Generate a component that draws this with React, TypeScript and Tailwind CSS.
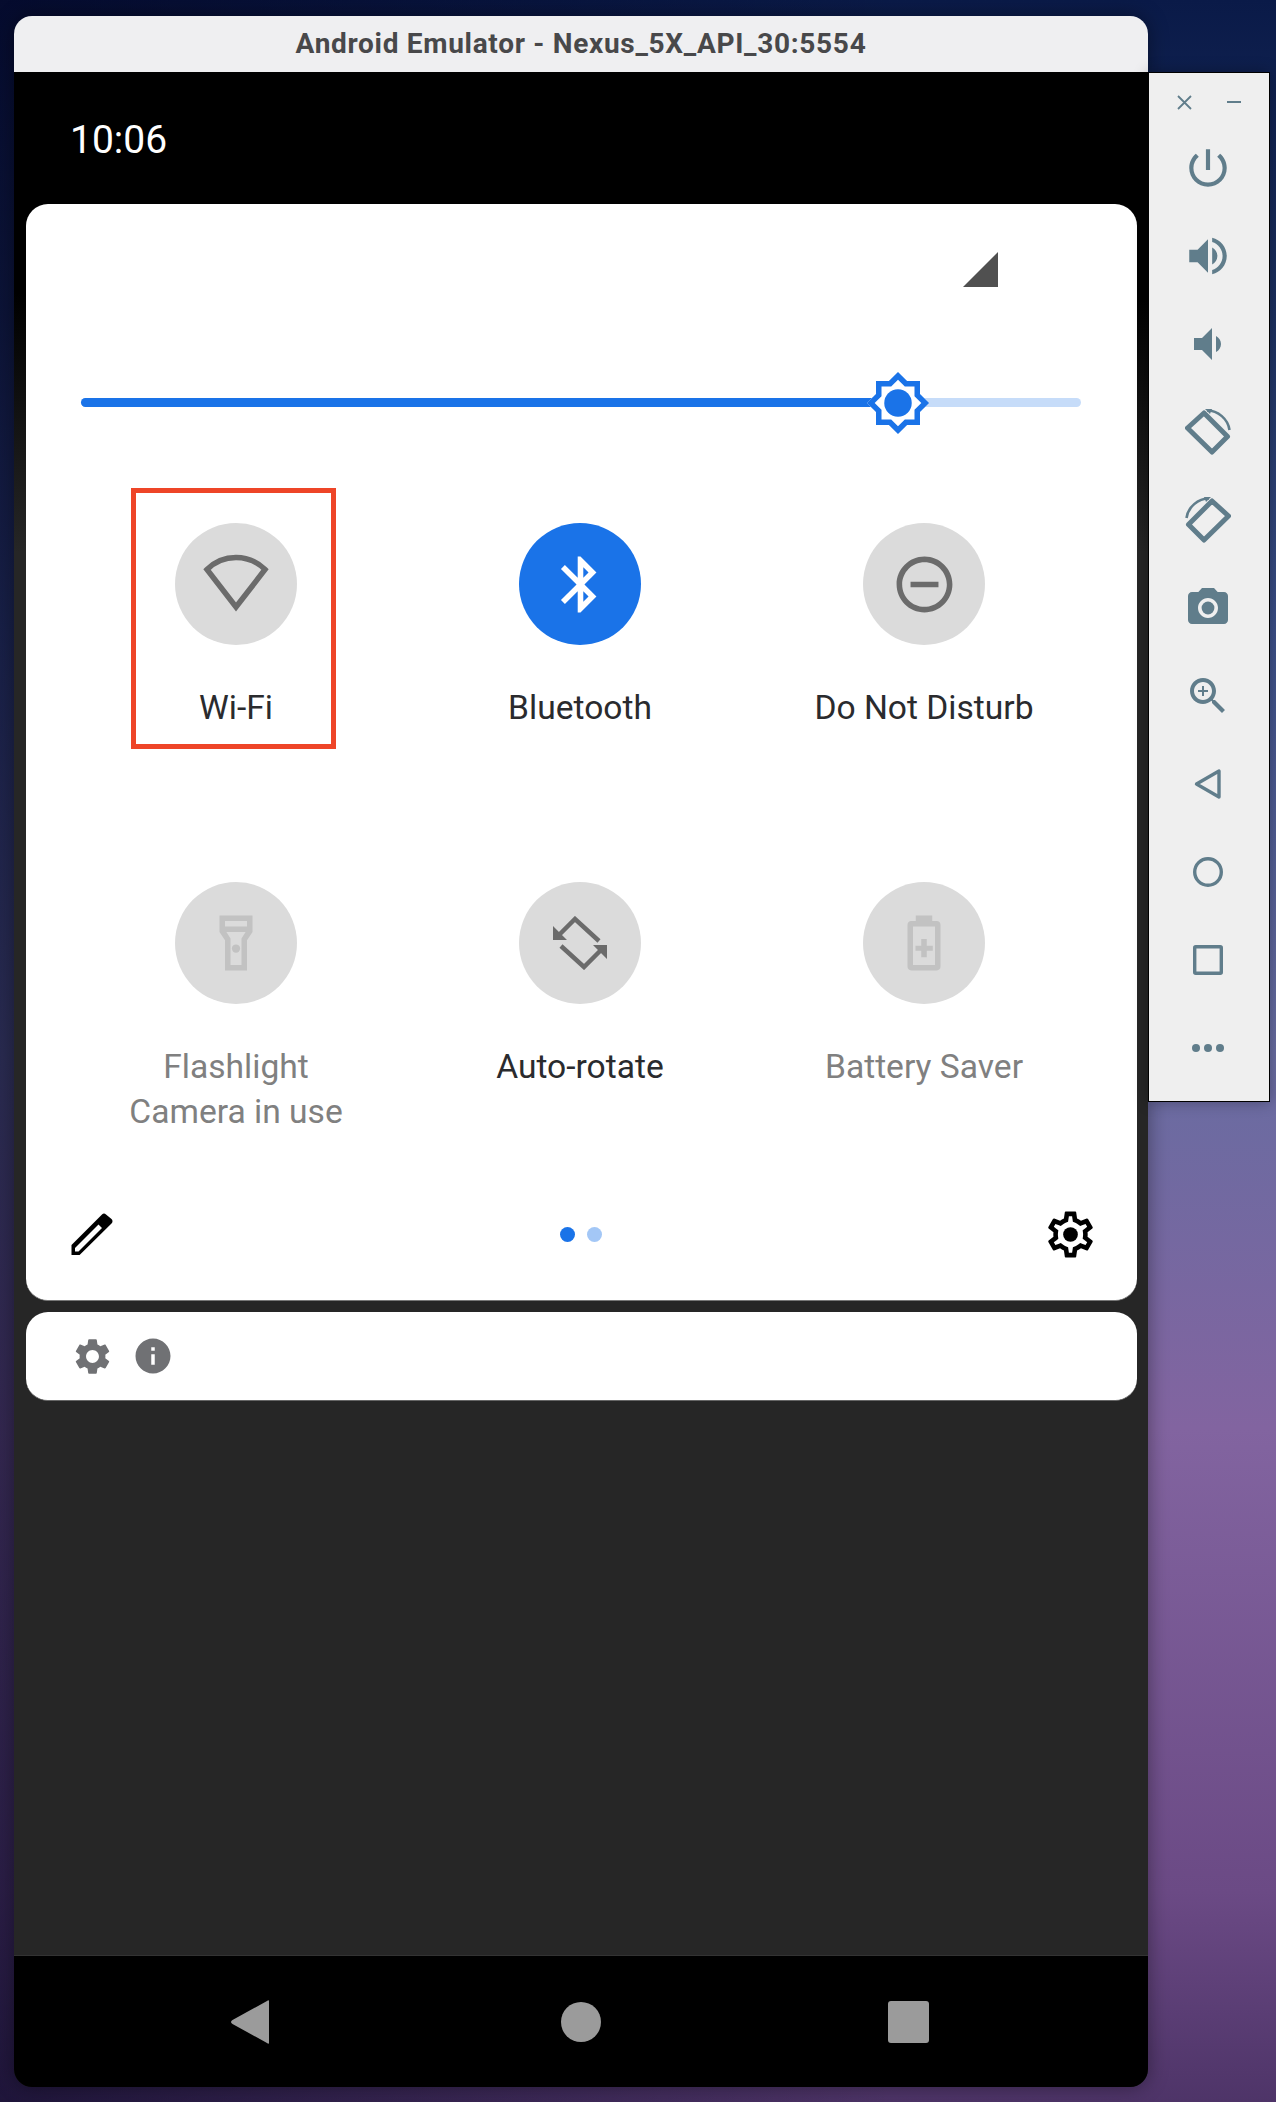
import type { ReactNode } from "react";

const roboto = "font-['Roboto',sans-serif]";

function Icon({ size, d, className, children }: { size: number; d?: string; className?: string; children?: ReactNode }) {
  return (
    <svg width={size} height={size} viewBox="0 0 24 24" fill="currentColor" fillRule="evenodd" className={className}>
      {d && <path d={d} />}
      {children}
    </svg>
  );
}

function RotateIcon({ flip }: { flip?: boolean }) {
  return (
    <svg width="46" height="46" viewBox="0 0 46 46" fill="none" stroke="currentColor" className={flip ? "-scale-x-100" : ""}>
      <path d="M2.500 19 19 4 42.500 27.500 27 43Z" strokeWidth="5" strokeLinejoin="round" />
      <path d="M22 1.500C33 1.500 43 10 44.500 21" strokeWidth="2.600" />
      <path d="M20 0 27 0 25 5Z" fill="currentColor" stroke="none" />
    </svg>
  );
}

const sideIcons = [
  <Icon size={50} d="M13 3h-2v10h2V3zm4.830 2.170-1.420 1.420C17.990 7.860 19 9.810 19 12c0 3.870-3.130 7-7 7s-7-3.130-7-7c0-2.190 1.010-4.140 2.580-5.420L6.170 5.170C4.230 6.820 3 9.260 3 12c0 4.970 4.030 9 9 9s9-4.030 9-9c0-2.740-1.230-5.180-3.170-6.830z" />,
  <Icon size={50} d="M3 9v6h4l5 5V4L7 9H3zm13.500 3c0-1.770-1.020-3.290-2.500-4.030v8.050c1.480-.73 2.500-2.250 2.500-4.020zM14 3.230v2.060c2.890.86 5 3.540 5 6.710s-2.110 5.850-5 6.710v2.060c4.010-.91 7-4.490 7-8.770s-2.990-7.860-7-8.770z" />,
  <Icon size={48} d="M18.500 12c0-1.770-1.020-3.290-2.500-4.030v8.050c1.480-.73 2.500-2.250 2.500-4.020zM5 9v6h4l5 5V4L9 9H5z" />,
  <RotateIcon />,
  <RotateIcon flip />,
  <Icon size={48} d="M9 2 7.170 4H4C2.900 4 2 4.900 2 6v12c0 1.100.9 2 2 2h16c1.100 0 2-.9 2-2V6c0-1.100-.9-2-2-2h-3.170L15 2H9zm3 15c-2.760 0-5-2.240-5-5s2.240-5 5-5 5 2.240 5 5-2.240 5-5 5z">
    <circle cx="12" cy="12" r="3.200" />
  </Icon>,
  <Icon size={48} d="M15.500 14h-.79l-.28-.27C15.410 12.590 16 11.110 16 9.500 16 5.910 13.090 3 9.500 3S3 5.910 3 9.500 5.910 16 9.500 16c1.610 0 3.090-.59 4.230-1.570l.27.28v.79l5 4.990L20.490 19l-4.990-5zm-6 0C7.010 14 5 11.990 5 9.500S7.010 5 9.500 5 14 7.010 14 9.500 11.990 14 9.500 14zM12 10h-2v2H9v-2H7V9h2V7h1v2h2v1z" />,
  <svg width="28" height="32" viewBox="0 0 28 32" fill="none" stroke="currentColor" strokeWidth="3.400" strokeLinejoin="round"><path d="M2.500 16 25 3v26Z" /></svg>,
  <svg width="32" height="32" viewBox="0 0 32 32" fill="none" stroke="currentColor" strokeWidth="3.400"><circle cx="16" cy="16" r="13.300" /></svg>,
  <svg width="30" height="30" viewBox="0 0 30 30" fill="none" stroke="currentColor" strokeWidth="3.400" strokeLinejoin="round"><rect x="1.700" y="1.700" width="26.600" height="26.600" rx="1" /></svg>,
  <svg width="32" height="8" viewBox="0 0 32 8" fill="currentColor"><circle cx="4" cy="4" r="4" /><circle cx="16" cy="4" r="4" /><circle cx="28" cy="4" r="4" /></svg>,
];

function Sidebar() {
  return (
    <div className="mt-[56px] flex h-[1030px] w-[122px] flex-col border border-black bg-[#efefef] pt-[22px] text-[#607d8b] shadow-[0_0_14px_rgba(0,0,0,0.3)]">
      <div className="mb-[15px] flex h-[14px] items-center">
        <svg width="15" height="15" viewBox="0 0 15 15" stroke="currentColor" strokeWidth="1.800" className="ml-[28px]"><path d="M1 1l13 13M14 1 1 14" /></svg>
        <div className="ml-[35px] h-[2px] w-[14px] bg-current" />
      </div>
      {sideIcons.map((icon, i) => (
        <div key={i} className="flex h-[88px] items-center justify-center pr-[2px]">{icon}</div>
      ))}
    </div>
  );
}

function Tile({ label, sub, on, dim, children }: { label: string; sub?: string; on?: boolean; dim?: boolean; children: ReactNode }) {
  return (
    <div className="flex h-[359px] flex-col items-center">
      <div className={`flex h-[122px] w-[122px] items-center justify-center rounded-full ${on ? "bg-[#1a73e8] text-white" : "bg-[#dbdbdb]"} ${dim ? "text-[#c2c2c2]" : on ? "" : "text-[#6b6b6b]"}`}>
        {children}
      </div>
      <div className={`mt-[40px] whitespace-nowrap text-center text-[33.600px] leading-[45px] ${dim ? "text-[#808080]" : "text-[#2a2b2e]"}`}>
        {label}
        {sub && <div>{sub}</div>}
      </div>
    </div>
  );
}

function QuickSettings() {
  return (
    <div className="mx-[11.500px] h-[1097px] rounded-[22px] border-b border-[#777] bg-white pt-[48px]">
      <div className="flex justify-end pr-[139px]">
        <svg width="35" height="35" viewBox="0 0 34 34" fill="#505050"><path d="M34 0v34H0Z" /></svg>
      </div>
      <div className="relative mx-[55.500px] mt-[111px] h-[9px] rounded-full bg-[#c6dcf9]">
        <div className="h-full w-[81.700%] rounded-full bg-[#1a73e8]" />
        <svg width="66" height="66" viewBox="0 0 24 24" className="absolute left-[81.700%] top-1/2 -translate-x-1/2 -translate-y-1/2">
          <path fill="#fff" d="M20 8.690V4h-4.690L12 .69 8.690 4H4v4.690L.69 12 4 15.310V20h4.690L12 23.310 15.310 20H20v-4.690L23.310 12z" />
          <path fill="#1a73e8" fillRule="evenodd" d="M20 8.690V4h-4.690L12 .69 8.690 4H4v4.690L.69 12 4 15.310V20h4.690L12 23.310 15.310 20H20v-4.690L23.310 12 20 8.690zm-2 5.790V18h-3.520L12 20.480 9.520 18H6v-3.520L3.520 12 6 9.520V6h3.520L12 3.520 14.480 6H18v3.520L20.480 12 18 14.480z" />
          <circle cx="12" cy="12" r="5" fill="#1a73e8" />
        </svg>
      </div>
      <div className="ml-[38.500px] mr-[40.500px] mt-[116px] grid grid-cols-3">
        <div className="relative">
          <Tile label="Wi-Fi">
            <svg width="66" height="58" viewBox="0 0 66 58" fill="none" stroke="currentColor" strokeWidth="5.500" className="mt-[-2px]">
              <path d="M4 15.500C20 -.5 46 -.5 62 15.500L33 53Z" />
            </svg>
          </Tile>
          <div className="absolute left-[67px] top-[-35px] h-[261px] w-[205px] border-[5px] border-[#ee4528]" />
        </div>
        <Tile label="Bluetooth" on>
          <Icon size={67} d="M17.710 7.710 12 2h-1v7.590L6.410 5 5 6.410 10.590 12 5 17.590 6.410 19 11 14.410V22h1l5.710-5.710-4.300-4.290 4.300-4.290zM13 5.830l1.880 1.880L13 9.590V5.830zm1.880 10.460L13 18.170v-3.760l1.880 1.880z" />
        </Tile>
        <Tile label="Do Not Disturb">
          <Icon size={67} d="M12 2C6.480 2 2 6.480 2 12s4.480 10 10 10 10-4.480 10-10S17.520 2 12 2zm0 18c-4.410 0-8-3.590-8-8s3.590-8 8-8 8 3.590 8 8-3.590 8-8 8zM7 11h10v2H7z" />
        </Tile>
        <Tile label="Flashlight" sub="Camera in use" dim>
          <Icon size={66} d="M6 2h12v6l-2 3v11H8V11L6 8zM8 4v2h8V4zM8.500 8 10 10.400V20h4v-9.600L15.500 8z">
            <circle cx="12" cy="14" r="1.500" />
          </Icon>
        </Tile>
        <Tile label="Auto-rotate">
          <svg width="54" height="54" viewBox="0 0 54 54" fill="none" stroke="currentColor" strokeWidth="4.500">
            <path d="M5 20 22 3 46 25M8 30 31 51 50 32" />
            <path d="M0 10v14h14ZM54 29H40l14 14Z" fill="currentColor" stroke="none" />
          </svg>
        </Tile>
        <Tile label="Battery Saver" dim>
          <Icon size={66} d="M16.670 4H15V2H9v2H7.330C6.600 4 6 4.600 6 5.330v15.340C6 21.400 6.600 22 7.330 22h9.340c.73 0 1.330-.6 1.330-1.330V5.330C18 4.600 17.400 4 16.670 4zM8 6v14h8V6zM11 10.500h2V13h2.200v1.800H13v2.400h-2v-2.400H8.900V13H11z" />
        </Tile>
      </div>
      <div className="mt-[-34px] flex h-[55px] items-center justify-between px-[39px]">
        <div className="flex w-[55px] pl-[6.500px]">
          <svg width="42" height="43" viewBox="0 0 42 43" fill="black">
            <path fillRule="evenodd" d="M.5 42V32L31 1.500Q33-.5 35 1.500L40.500 6Q42.500 8 40.500 10.500L8.600 42ZM4 38.500H7.500L31 15 27.500 11.500 4 35Z" />
          </svg>
        </div>
        <div className="flex gap-[12px]">
          <div className="h-[15px] w-[15px] rounded-full bg-[#1a73e8]" />
          <div className="h-[15px] w-[15px] rounded-full bg-[#a3c7f6]" />
        </div>
        <svg width="55" height="55" viewBox="0 0 24 24" fill="black">
          <path fillRule="evenodd" d="M19.430 12.980c.04-.32.07-.64.07-.98 0-.34-.03-.66-.07-.98l2.110-1.650c.19-.15.24-.42.12-.64l-2-3.460c-.12-.22-.39-.3-.61-.22l-2.490 1c-.52-.4-1.080-.73-1.690-.98l-.38-2.650C14.460 2.180 14.250 2 14 2h-4c-.25 0-.46.18-.49.42l-.38 2.650c-.61.25-1.170.59-1.690.98l-2.490-1c-.23-.09-.49 0-.61.22l-2 3.460c-.13.22-.07.49.12.64l2.110 1.650c-.04.32-.07.65-.07.98 0 .33.03.66.07.98l-2.110 1.650c-.19.15-.24.42-.12.64l2 3.460c.12.22.39.3.61.22l2.490-1c.52.4 1.080.73 1.690.98l.38 2.650c.03.24.24.42.49.42h4c.25 0 .46-.18.49-.42l.38-2.650c.61-.25 1.170-.59 1.690-.98l2.490 1c.23.09.49 0 .61-.22l2-3.460c.12-.22.07-.49-.12-.64l-2.110-1.650zM17.450 11.270c.04.31.05.52.05.73 0 .21-.02.43-.05.73l-.14 1.130.89.7 1.080.84-.7 1.210-1.270-.51-1.040-.42-.9.68c-.43.32-.84.56-1.250.73l-1.060.43-.16 1.130-.2 1.350h-1.400l-.19-1.350-.16-1.130-1.060-.43c-.43-.18-.83-.41-1.230-.71l-.91-.7-1.060.43-1.270.51-.7-1.210 1.080-.84.89-.7-.14-1.130c-.03-.31-.05-.54-.05-.74s.02-.43.05-.73l.14-1.130-.89-.7-1.080-.84.7-1.210 1.270.51 1.040.42.9-.68c.43-.32.84-.56 1.250-.73l1.060-.43.16-1.130.2-1.350h1.390l.19 1.350.16 1.130 1.060.43c.43.18.83.41 1.230.71l.91.7 1.060-.43 1.270-.51.7 1.210-1.070.85-.89.7.14 1.130z" />
          <circle cx="12" cy="12" r="3.200" />
        </svg>
      </div>
    </div>
  );
}

export default function App() {
  return (
    <div className={`${roboto} flex h-[2102px] w-[1276px] items-start bg-[linear-gradient(90deg,rgba(2,2,30,0.62),rgba(2,2,30,0)_70%),linear-gradient(180deg,#0a1a48_0%,#1c3060_15%,#3b4f88_30%,#686ca1_50%,#8264a0_68%,#6b4a85_90%,#4e3468_100%)] pl-[14px] pt-[16px]`}>
      <div className="flex h-[2071px] w-[1134px] flex-col overflow-hidden rounded-[18px] shadow-[0_0_20px_rgba(0,0,0,0.4)]">
        <div className="flex h-[56px] items-center justify-center bg-[#efeff1] text-[28px] font-bold tracking-[0.7px] text-[#48484a]">
          Android Emulator - Nexus_5X_API_30:5554
        </div>
        <div className="flex flex-1 flex-col bg-[linear-gradient(180deg,#000_0,#000_221px,#262626_480px)]">
          <div className="h-[132px] pl-[56px] pt-[46px] text-[39px] leading-[45px] text-white">10:06</div>
          <QuickSettings />
          <div className="mx-[11.500px] mt-[11px] flex h-[89px] items-center gap-[18.500px] rounded-[22px] border-b border-[#666] bg-white pl-[45px] text-[#707174]">
            <Icon size={43} d="M19.140 12.940c.04-.3.06-.61.06-.94 0-.32-.02-.64-.07-.94l2.030-1.580c.18-.14.23-.41.12-.61l-1.920-3.320c-.12-.22-.37-.29-.59-.22l-2.390.96c-.5-.38-1.030-.7-1.620-.94l-.36-2.540c-.04-.24-.24-.41-.48-.41h-3.840c-.24 0-.43.17-.47.41l-.36 2.540c-.59.24-1.130.57-1.620.94l-2.390-.96c-.22-.08-.47 0-.59.22L2.740 8.870c-.12.21-.08.47.12.61l2.030 1.580c-.05.3-.09.63-.09.94s.02.64.07.94l-2.030 1.580c-.18.14-.23.41-.12.61l1.920 3.320c.12.22.37.29.59.22l2.390-.96c.5.38 1.030.7 1.620.94l.36 2.540c.05.24.24.41.48.41h3.840c.24 0 .44-.17.47-.41l.36-2.540c.59-.24 1.130-.56 1.620-.94l2.390.96c.22.08.47 0 .59-.22l1.920-3.320c.12-.22.07-.47-.12-.61l-2.010-1.580zM12 15.600c-1.980 0-3.600-1.620-3.600-3.600s1.620-3.600 3.600-3.600 3.600 1.620 3.600 3.600-1.620 3.600-3.600 3.600z" />
            <Icon size={42} d="M12 2C6.480 2 2 6.480 2 12s4.480 10 10 10 10-4.480 10-10S17.520 2 12 2zm1 15h-2v-6h2v6zm0-8h-2V7h2v2z" />
          </div>
          <div className="flex-1" />
          <div className="grid h-[132px] grid-cols-3 items-center justify-items-center border-t border-[#333] bg-black px-[70px]">
            <svg width="38" height="44" viewBox="0 0 38 44" fill="#9b9b9b"><path d="M38 1C38 0 37 0 36 1L1.500 20c-2 1.500-2 2.500 0 4L36 43c1 1 2 1 2 0Z" /></svg>
            <div className="h-[40px] w-[40px] rounded-full bg-[#9b9b9b]" />
            <div className="mr-[8px] h-[42px] w-[41px] rounded-[3px] bg-[#9b9b9b]" />
          </div>
        </div>
      </div>
      <Sidebar />
    </div>
  );
}
